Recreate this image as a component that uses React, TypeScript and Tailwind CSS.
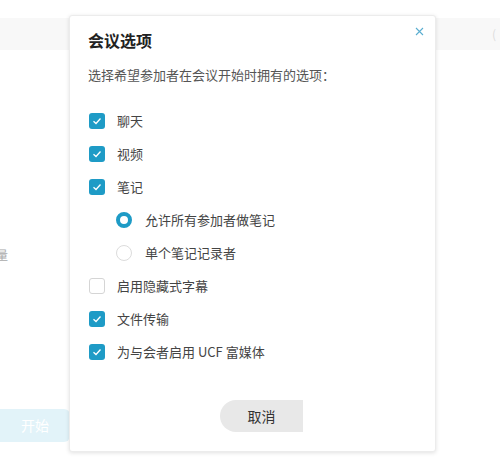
import React from "react";

const font = { fontFamily: '"Noto Sans CJK SC", "Noto Sans", sans-serif' };

const Check = ({ on }: { on: boolean }) =>
  on ? (
    <span className="w-[16px] h-[16px] rounded-[3px] bg-[#1e9bc6] flex items-center justify-center shrink-0">
      <svg width="10" height="8" viewBox="0 0 10 8" fill="none">
        <path d="M1.5 4.2 L4 6.5 L8.5 1.5" stroke="white" strokeWidth="1.3" />
      </svg>
    </span>
  ) : (
    <span className="w-[16px] h-[16px] rounded-[3px] border border-[#d5d5d5] bg-white shrink-0" />
  );

const Radio = ({ on }: { on: boolean }) =>
  on ? (
    <span className="w-[16px] h-[16px] rounded-full border-[4px] border-[#1e9bc6] bg-white shrink-0" />
  ) : (
    <span className="w-[16px] h-[16px] rounded-full border border-[#dcdcdc] bg-white shrink-0" />
  );

const rows: { label: string; kind: "check" | "radio"; on: boolean }[] = [
  { label: "聊天", kind: "check", on: true },
  { label: "视频", kind: "check", on: true },
  { label: "笔记", kind: "check", on: true },
  { label: "允许所有参加者做笔记", kind: "radio", on: true },
  { label: "单个笔记记录者", kind: "radio", on: false },
  { label: "启用隐藏式字幕", kind: "check", on: false },
  { label: "文件传输", kind: "check", on: true },
  { label: "为与会者启用 UCF 富媒体", kind: "check", on: true },
];

export default function App() {
  return (
    <div className="relative w-[500px] h-[460px] bg-white overflow-hidden" style={font}>
      {/* page behind the dialog */}
      <div className="flex flex-col h-full">
        <div className="h-[18px]" />
        <div className="h-[32px] bg-[#f8f8f8] flex items-center justify-end pr-1">
          <span className="text-[12px] text-[#ddd]">(</span>
        </div>
        <div className="h-[197px]" />
        <div className="text-[12px] text-[#aaa] -ml-[4px] leading-[16px]">量</div>
        <div className="h-[146px]" />
        <div className="w-[70px] h-[33px] bg-[#e2f3f9] rounded-r-[6px] flex items-center justify-center text-white text-[14px]">
          开始
        </div>
      </div>

      {/* dialog */}
      <div className="absolute left-[69px] top-[15px] w-[367px] h-[437px] bg-white rounded-[3px] border border-[#ececec] shadow-[0_1px_4px_rgba(0,0,0,0.12)] flex flex-col">
        <button className="absolute right-[11px] top-[11px] text-[#5aaed0]">
          <svg width="9" height="9" viewBox="0 0 9 9" fill="none">
            <path d="M1 1 L8 8 M8 1 L1 8" stroke="currentColor" strokeWidth="1.1" />
          </svg>
        </button>
        <h2 className="pl-[18px] pt-[12px] text-[16px] font-bold text-[#222] leading-[24px]">会议选项</h2>
        <p className="pl-[18px] mt-[14px] text-[13px] text-[#555] leading-[18px]">
          选择希望参加者在会议开始时拥有的选项：
        </p>
        <div className="flex flex-col mt-[20px] pl-[19px]">
          {rows.map((r) => (
            <div
              key={r.label}
              className={`h-[33px] flex items-center ${r.kind === "radio" ? "pl-[27px] gap-[13px]" : "gap-[12px]"}`}
            >
              {r.kind === "check" ? <Check on={r.on} /> : <Radio on={r.on} />}
              <span className="text-[13px] text-[#444]">{r.label}</span>
            </div>
          ))}
        </div>
        <div className="flex-1 flex items-end justify-center pb-[19px]">
          <button className="w-[83px] h-[32px] ml-[18px] bg-[#e8e8e8] rounded-l-full text-[14px] text-[#333]">
            取消
          </button>
        </div>
      </div>
    </div>
  );
}
